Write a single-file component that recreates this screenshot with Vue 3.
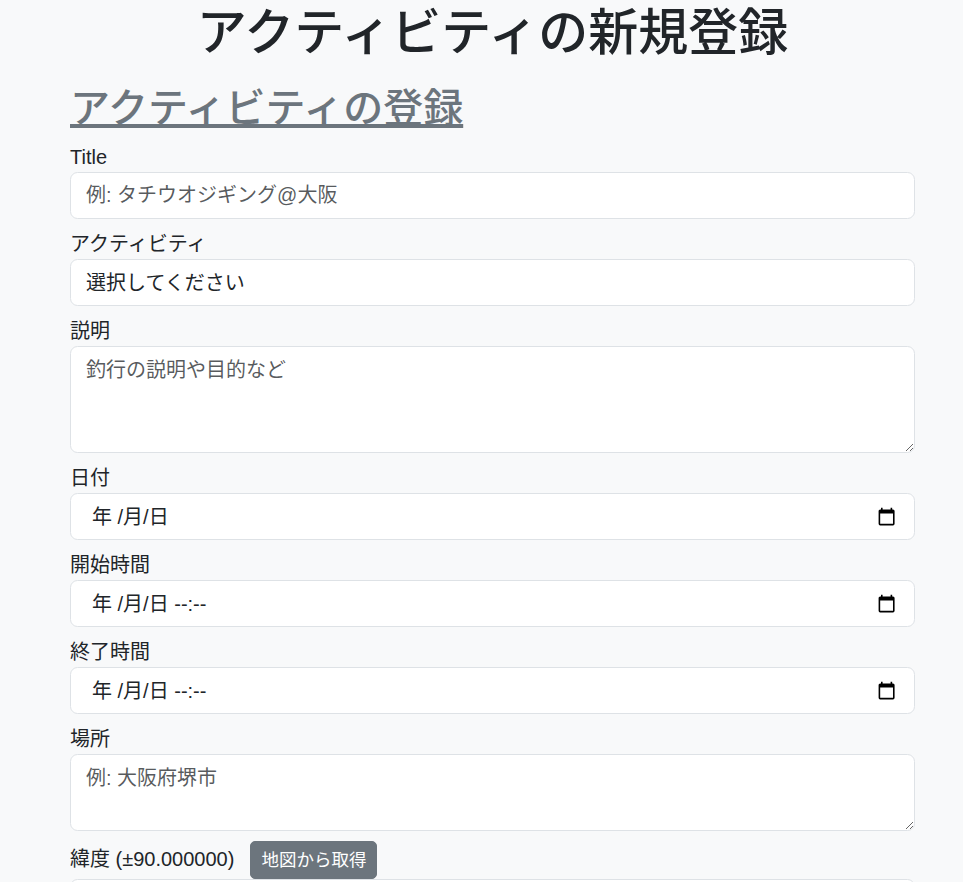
<script setup>
const dateFields = [
  { label: '日付', value: '年 /月/日' },
  { label: '開始時間', value: '年 /月/日 --:--' },
  { label: '終了時間', value: '年 /月/日 --:--' },
]
</script>

<template>
  <main class="page">
    <h1 class="title">アクティビティの新規登録</h1>
    <h2 class="subtitle"><a href="#" @click.prevent>アクティビティの登録</a></h2>
    <form class="form" @submit.prevent>
      <div class="field">
        <label class="label">Title</label>
        <input class="control" type="text" placeholder="例: タチウオジギング@大阪" />
      </div>
      <div class="field">
        <label class="label">アクティビティ</label>
        <select class="control">
          <option>選択してください</option>
        </select>
      </div>
      <div class="field">
        <label class="label">説明</label>
        <textarea class="control area-lg" placeholder="釣行の説明や目的など"></textarea>
      </div>
      <div v-for="f in dateFields" :key="f.label" class="field">
        <label class="label">{{ f.label }}</label>
        <div class="control date">
          <span class="date-text">{{ f.value }}</span>
          <svg class="cal" viewBox="0 0 24 24" aria-hidden="true">
            <path d="M20 3h-1V1h-2v2H7V1H5v2H4c-1.1 0-2 .9-2 2v16c0 1.1.9 2 2 2h16c1.1 0 2-.9 2-2V5c0-1.1-.9-2-2-2zm0 18H4V8h16v13z" />
          </svg>
        </div>
      </div>
      <div class="field">
        <label class="label">場所</label>
        <textarea class="control area-sm" placeholder="例: 大阪府堺市"></textarea>
      </div>
      <div class="field">
        <div class="label-row">
          <label class="label">緯度 (±90.000000)</label>
          <button class="btn" type="button">地図から取得</button>
        </div>
        <input class="control" type="text" />
      </div>
    </form>
  </main>
</template>

<style>
html, body { margin: 0; background: #f8f9fa; overflow: hidden; }
</style>

<style scoped>
.page {
  box-sizing: border-box;
  padding: 3px 48px 0 70px;
  color: #212529;
  font-family: "Liberation Sans", "Noto Sans CJK JP", sans-serif;
  font-size: 20px;
  line-height: 1.5;
}
.title {
  margin: 0 0 21px;
  font-size: 50px;
  font-weight: 500;
  line-height: 1.2;
  text-align: center;
}
.subtitle {
  margin: 0 0 10px;
  font-size: 40px;
  font-weight: 500;
  line-height: 1.2;
}
.subtitle a { color: #6c757d; text-decoration: underline; }
.form { display: flex; flex-direction: column; gap: 10px; }
.field { display: flex; flex-direction: column; }
.label { display: block; }
.label-row { display: flex; align-items: baseline; gap: 16px; height: 38px; }
.control {
  box-sizing: border-box;
  display: block;
  width: 100%;
  height: 47px;
  margin: 0;
  padding: 7.5px 15px;
  border: 1px solid #dee2e6;
  border-radius: 7.5px;
  background: #fff;
  color: #212529;
  font: inherit;
  appearance: none;
  outline: none;
}
.control::placeholder { color: rgba(33, 37, 41, 0.75); opacity: 1; }
textarea.control { resize: vertical; }
.area-lg { height: 107px; }
.area-sm { height: 77px; }
.date { display: flex; align-items: center; justify-content: space-between; padding-left: 21px; padding-right: 18px; }
.cal { width: 19.2px; height: 19.2px; fill: #000; flex: none; }
.btn {
  box-sizing: border-box;
  height: 38px;
  padding: 5px 10px;
  border: 1px solid #6c757d;
  border-radius: 5px;
  background: #6c757d;
  color: #fff;
  font: inherit;
  font-size: 17.5px;
  line-height: 1.5;
}
</style>
